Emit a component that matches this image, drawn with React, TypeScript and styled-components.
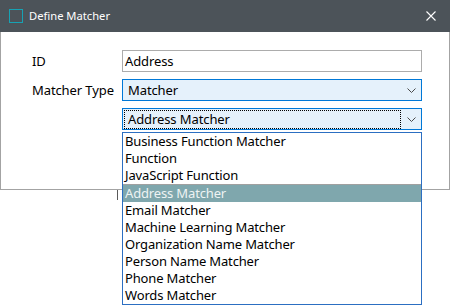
import React from "react";
import styled, { createGlobalStyle } from "styled-components";

const GlobalStyle = createGlobalStyle`
  html, body { margin: 0; padding: 0; background: #ffffff; }
  body { font-family: "Noto Sans", "DejaVu Sans", sans-serif; }
  * { box-sizing: border-box; }
`;

const uiFont = `"Noto Sans", "DejaVu Sans", sans-serif`;

const Page = styled.div`
  position: relative;
  width: 451px;
  height: 307px;
  background: #ffffff;
  overflow: hidden;
`;

const Dialog = styled.div`
  width: 450px;
  height: 190px;
  border: 1px solid #a3a3a3;
  border-top: none;
  background: #ffffff;
  display: flex;
  flex-direction: column;
`;

const TitleBar = styled.div`
  height: 32px;
  margin: 0 -1px;
  background: #4c5359;
  display: flex;
  align-items: center;
  padding-left: 9px;
  padding-right: 7px;
  color: #ffffff;
  font-family: ${uiFont};
  font-size: 11.2px;
`;

const TitleIcon = styled.span`
  width: 14px;
  height: 14px;
  border: 1.5px solid #17a2b4;
  margin-right: 6px;
  flex: none;
`;

const TitleText = styled.span`
  flex: 1;
  padding-bottom: 1px;
`;

const CloseButton = styled.span`
  width: 10px;
  height: 10px;
  margin-right: 7px;
  display: flex;
`;

const Form = styled.div`
  display: grid;
  grid-template-columns: 90px 300px;
  grid-auto-rows: 22px;
  row-gap: 7px;
  padding: 18px 0 0 31px;
  font-family: ${uiFont};
  font-size: 13px;
  letter-spacing: -0.1px;
  color: #000000;
`;

const Label = styled.div`
  display: flex;
  align-items: center;
  padding-bottom: 1px;
`;

const TextField = styled.div`
  border: 1px solid #acacac;
  background: #ffffff;
  display: flex;
  align-items: center;
  padding: 0 0 1px 2px;
`;

const Combo = styled.div`
  border: 1px solid #0078d7;
  background: #e5f1fb;
  display: flex;
  align-items: center;
  padding: 0 4px 0 1px;
`;

const ComboValue = styled.div<{ $focused?: boolean }>`
  flex: 1;
  height: 19px;
  margin-right: 6px;
  padding: 0 0 1px 3px;
  display: flex;
  align-items: center;
  border: 1px ${(p) => (p.$focused ? "dotted #000" : "solid transparent")};
`;

const Chevron = () => (
  <svg width="9" height="5" viewBox="0 0 9 5" style={{ flex: "none", marginRight: 1 }}>
    <path d="M0.5 0.5 L4.5 4.5 L8.5 0.5" fill="none" stroke="#4a4a4a" strokeWidth="1" />
  </svg>
);

const DropList = styled.ul`
  position: absolute;
  left: 122px;
  top: 132px;
  width: 300px;
  height: 173px;
  margin: 0;
  padding: 0;
  list-style: none;
  background: #ffffff;
  border: 1px solid #2c6fc2;
  font-family: ${uiFont};
  font-size: 13px;
  letter-spacing: -0.15px;
  color: #000000;
`;

const Item = styled.li<{ $selected?: boolean }>`
  height: 17px;
  line-height: 16px;
  padding-left: 2px;
  white-space: nowrap;
  background: ${(p) => (p.$selected ? "#7fa7ad" : "transparent")};
  color: ${(p) => (p.$selected ? "#eef3f3" : "#000000")};
`;

const Separator = styled.li`
  height: 1px;
  background: #a0a0a0;
`;

const CaretMark = styled.span`
  position: absolute;
  left: 117px;
  top: 190px;
  width: 1px;
  height: 10px;
  background: #5a5a5a;
`;

const firstGroup = ["Business Function Matcher", "Function", "JavaScript Function"];
const secondGroup = [
  "Address Matcher",
  "Email Matcher",
  "Machine Learning Matcher",
  "Organization Name Matcher",
  "Person Name Matcher",
  "Phone Matcher",
  "Words Matcher",
];

export default function App() {
  return (
    <Page>
      <GlobalStyle />
      <Dialog>
        <TitleBar>
          <TitleIcon />
          <TitleText>Define Matcher</TitleText>
          <CloseButton>
            <svg width="10" height="10" viewBox="0 0 10 10">
              <path d="M0.5 0.5 L9.5 9.5 M9.5 0.5 L0.5 9.5" stroke="#ffffff" strokeWidth="1.1" />
            </svg>
          </CloseButton>
        </TitleBar>
        <Form>
          <Label>ID</Label>
          <TextField>Address</TextField>
          <Label>Matcher Type</Label>
          <Combo>
            <ComboValue>Matcher</ComboValue>
            <Chevron />
          </Combo>
          <div />
          <Combo>
            <ComboValue $focused>Address Matcher</ComboValue>
            <Chevron />
          </Combo>
        </Form>
      </Dialog>
      <CaretMark />
      <DropList>
        {firstGroup.map((t) => (
          <Item key={t}>{t}</Item>
        ))}
        <Separator />
        {secondGroup.map((t, i) => (
          <Item key={t} $selected={i === 0}>
            {t}
          </Item>
        ))}
      </DropList>
    </Page>
  );
}
